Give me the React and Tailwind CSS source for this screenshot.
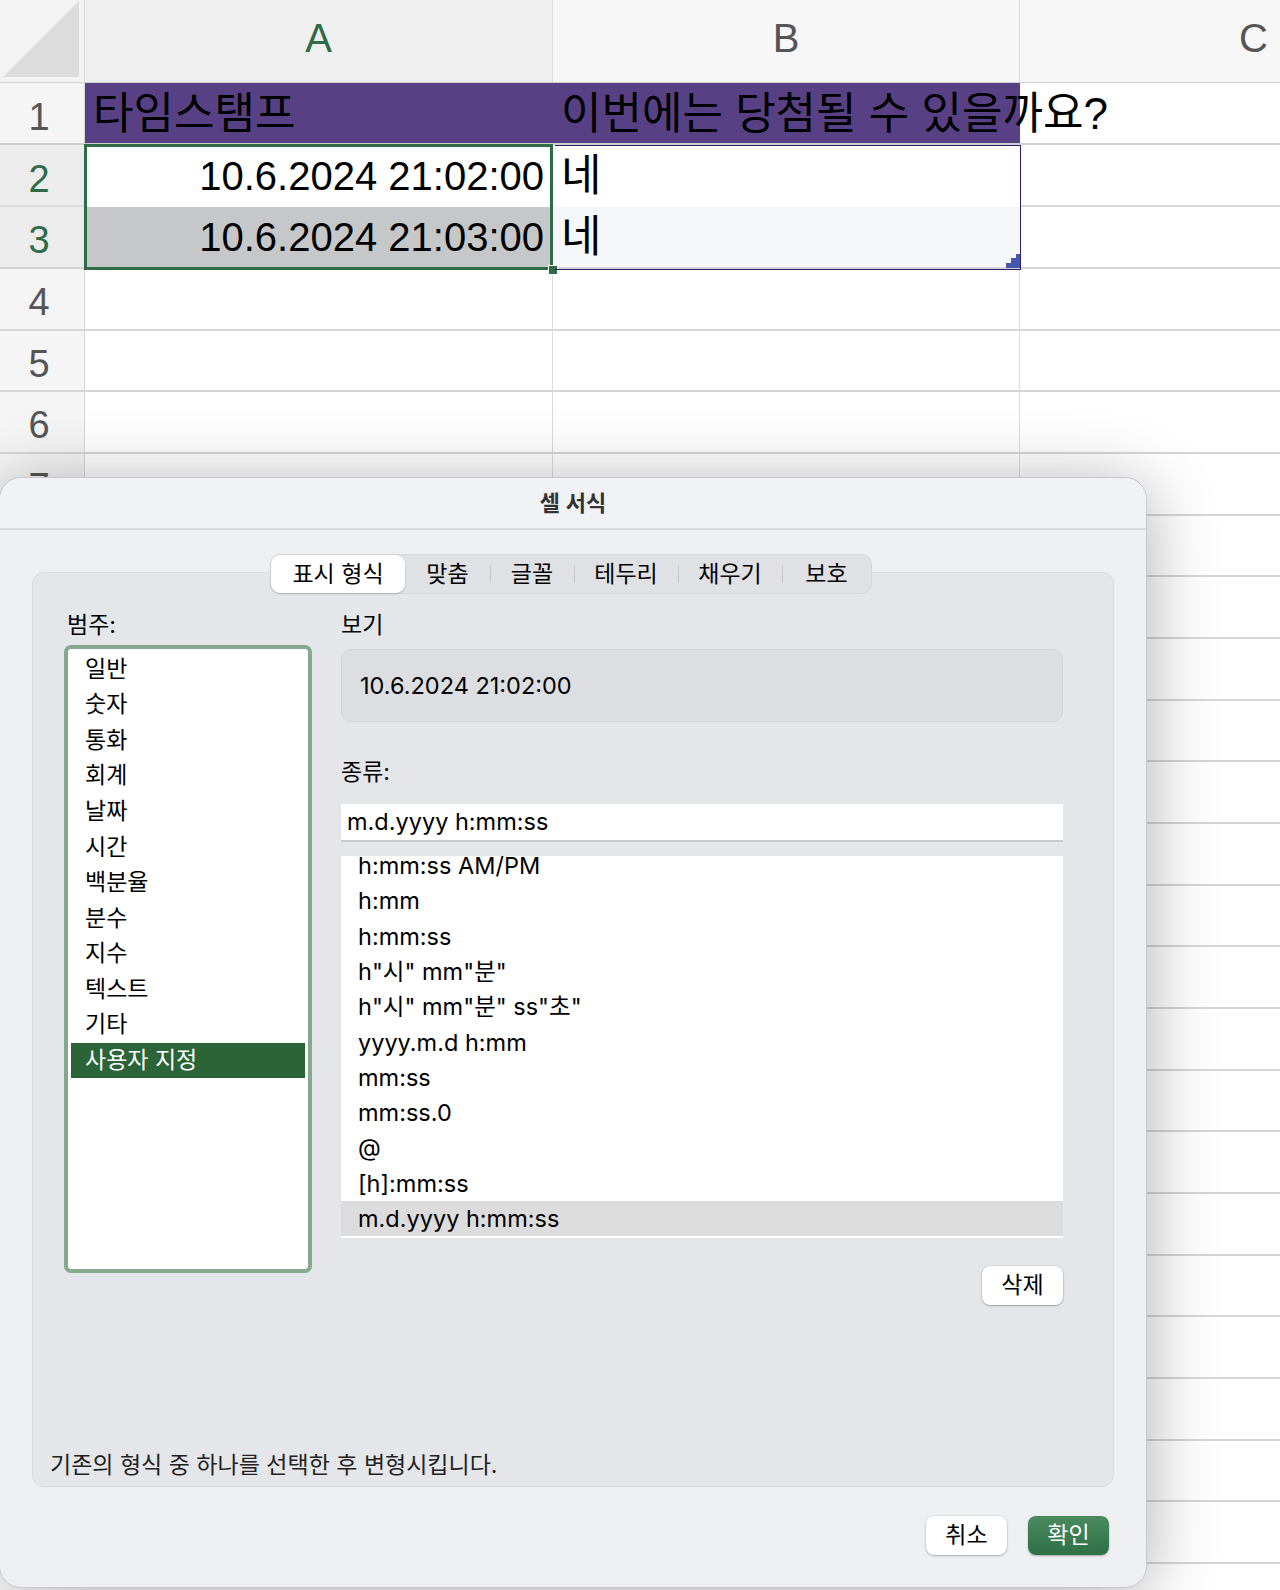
import React from 'react'

const sheetFont = "font-['Liberation_Sans','Noto_Sans_CJK_KR',sans-serif]"
const dlgFont = "font-['Inter','Noto_Sans_CJK_KR',sans-serif]"

const categories = ['일반', '숫자', '통화', '회계', '날짜', '시간', '백분율', '분수', '지수', '텍스트', '기타', '사용자 지정']
const formats = [
  'h:mm:ss AM/PM',
  'h:mm',
  'h:mm:ss',
  'h"시" mm"분"',
  'h"시" mm"분" ss"초"',
  'yyyy.m.d h:mm',
  'mm:ss',
  'mm:ss.0',
  '@',
  '[h]:mm:ss',
  'm.d.yyyy h:mm:ss',
]
const tabs = [
  { name: '표시 형식', w: 'w-[134px]' },
  { name: '맞춤', w: 'w-[85px]' },
  { name: '글꼴', w: 'w-[84px]' },
  { name: '테두리', w: 'w-[104px]' },
  { name: '채우기', w: 'w-[104px]' },
  { name: '보호', w: 'w-[89px]' },
]

function Sheet() {
  const emptyRows = Array.from({ length: 21 }, (_, i) => i + 4)
  return (
    <div className={`relative w-[1280px] leading-none ${sheetFont}`}>
      {/* column header */}
      <div className="grid grid-cols-[85px_468px_467px_1fr] grid-rows-[minmax(0,1fr)] h-[83px] border-b border-[#cfcfcf]">
        <div className="bg-[#f3f3f3] border-r border-[#d8d8d8] flex items-end justify-end pr-[5px] pb-[5px]">
          <svg width="76" height="76" viewBox="0 0 76 76"><polygon points="76,0 76,76 0,76" fill="#dcdcdc" /></svg>
        </div>
        <div className="bg-[#efefef] border-r border-[#dedede] flex items-center justify-center text-[40px] text-[#2e6b46] pb-[6px]">A</div>
        <div className="bg-[#f7f7f7] border-r border-[#dedede] flex items-center justify-center text-[40px] text-[#555] pb-[6px]">B</div>
        <div className="bg-[#f7f7f7] flex items-center justify-end pr-[12px] text-[40px] text-[#555] pb-[6px]">C</div>
      </div>
      {/* row 1 */}
      <div className="grid grid-cols-[85px_468px_467px_1fr] grid-rows-[minmax(0,1fr)] h-[62px] border-b-2 border-[#cfcfcf]">
        <div className="bg-[#f5f5f5] border-r border-[#d8d8d8] flex items-center justify-center pr-[6px] pt-[8px] text-[38px] text-[#555]">1</div>
        <div className="bg-[#574184] flex items-center pl-[8px] pt-[2px] text-[44px] text-black">타임스탬프</div>
        <div className="bg-[#574184] flex items-center pl-[8px] pt-[2px] text-[44px] text-black whitespace-nowrap overflow-visible">
          <span className="relative z-10">이번에는 당첨될 수 있을까요?</span>
        </div>
        <div className="bg-white"></div>
      </div>
      {/* row 2 */}
      <div className="grid grid-cols-[85px_468px_467px_1fr] grid-rows-[minmax(0,1fr)] h-[62px]">
        <div className="bg-[#ececec] border-r border-b-2 border-[#dcdcdc] flex items-center justify-center pr-[6px] pt-[8px] text-[38px] text-[#2e6b46]">2</div>
        <div className="bg-white flex items-center justify-end pr-[9px] text-[40px] text-black">10.6.2024 21:02:00</div>
        <div className="bg-white flex items-center pl-[8px] text-[44px] text-black">네</div>
        <div className="bg-white border-l border-b-2 border-[#d8d8d8]"></div>
      </div>
      {/* row 3 */}
      <div className="grid grid-cols-[85px_468px_467px_1fr] grid-rows-[minmax(0,1fr)] h-[62px] border-b-2 border-[#d4d4d4]">
        <div className="bg-[#ececec] border-r border-[#d8d8d8] flex items-center justify-center pr-[6px] pt-[6px] text-[38px] text-[#2e6b46]">3</div>
        <div className="bg-[#c6c7c9] flex items-center justify-end pr-[9px] text-[40px] text-black">10.6.2024 21:03:00</div>
        <div className="bg-[#f6f7f9] flex items-center pl-[8px] text-[44px] text-black">네</div>
        <div className="bg-white border-l border-[#dcdcdc]"></div>
      </div>
      {emptyRows.map((n, i) => (
        <div key={n} className={`grid grid-cols-[85px_468px_467px_1fr] grid-rows-[minmax(0,1fr)] border-b-2 border-[#d6d6d6] ${i % 3 === 1 ? 'h-[61px]' : 'h-[62px]'}`}>
          <div className="bg-[#f5f5f5] border-r border-[#d8d8d8] flex items-center justify-center pr-[6px] pt-[6px] text-[38px] text-[#555]">{n}</div>
          <div className="bg-white border-r border-[#dcdcdc]"></div>
          <div className="bg-white border-r border-[#dcdcdc]"></div>
          <div className="bg-white"></div>
        </div>
      ))}
      {/* selection A2:A3 */}
      <div className="absolute left-[84px] top-[144px] w-[469px] h-[126px] border-[3px] border-[#2e6b46] pointer-events-none" />
      <div className="absolute left-[548px] top-[265px] w-[10px] h-[10px] bg-[#2e6b46] border border-white" />
      {/* range B2:B3 */}
      <div className="absolute left-[555px] top-[145px] w-[466px] h-[125px] border-r border-b border-t border-[#2b1d6b] pointer-events-none" />
      <div className="absolute left-[1006px] top-[254px]">
        <svg width="14" height="14" viewBox="0 0 14 14"><polygon points="14,0 14,14 0,14 0,9 5,9 5,4 10,4 10,0" fill="#4357b0" /></svg>
      </div>
    </div>
  )
}

function Button({ children, primary }) {
  return (
    <div className={`w-[81px] h-[39px] rounded-[8px] flex items-center justify-center text-[23px] ${primary ? 'bg-gradient-to-b from-[#4a8a5e] to-[#2f7046] text-white shadow-[0_1px_2px_rgba(0,0,0,0.3)]' : 'bg-white text-black shadow-[0_0_0_0.5px_rgba(0,0,0,0.12),0_1px_2px_rgba(0,0,0,0.25)]'}`}>
      {children}
    </div>
  )
}

function Dialog() {
  return (
    <div className={`absolute left-[-1px] top-[477px] w-[1148px] h-[1111px] rounded-[22px] bg-[#eeeff2] border border-[#c8c8cc] shadow-[0_8px_70px_rgba(0,0,0,0.32)] ${dlgFont} text-black flex flex-col`}>
      <div className="h-[52px] flex items-center justify-center bg-[#f1f2f5] rounded-t-[22px] border-b-2 border-[#d9dadd] text-[22px] font-semibold text-[#333]">
        <span>셀 서식</span>
      </div>
      <div className="relative mx-[32px] mt-[42px] h-[915px] rounded-[12px] bg-[#e5e6e9] border border-[#dadbde]">
        {/* tabs */}
        <div className="absolute left-[237px] top-[-19px] h-[40px] flex items-center rounded-[10px] bg-[#e0e1e4] border border-[#d6d7da] text-[23px]">
          {tabs.map((t, i) => (
            <div key={t.name} className={`relative h-[38px] ${t.w} flex items-center justify-center ${i === 0 ? 'bg-white rounded-[9px] shadow-[0_1px_2px_rgba(0,0,0,0.2)]' : ''}`}>
              {i > 1 && <div className="absolute left-0 top-[10px] h-[18px] w-px bg-[#c9cacd]" />}
              <span>{t.name}</span>
            </div>
          ))}
        </div>
        <div className="flex pt-[39px] pl-[31px] pr-[50px]">
          {/* category */}
          <div className="w-[248px] flex flex-col">
            <div className="text-[23px] h-[27px] leading-[27px] pl-[3px]">범주:</div>
            <div className="mt-[6px] h-[628px] rounded-[7px] border-4 border-[#86a98d] bg-white p-[3px] pt-[2px]">
              {categories.map((c, i) => (
                <div key={c} className={`h-[35.6px] flex items-center pl-[14px] text-[23px] ${i === categories.length - 1 ? 'bg-[#2b6437] text-white' : ''}`}>{c}</div>
              ))}
            </div>
          </div>
          {/* type */}
          <div className="flex-1 ml-[29px] flex flex-col">
            <div className="text-[23px] h-[27px] leading-[27px]">보기</div>
            <div className="mt-[10px] h-[73px] rounded-[10px] bg-[#dddee1] border border-[#d5d6d9] flex items-center pl-[18px] text-[23.5px]">10.6.2024 21:02:00</div>
            <div className="mt-[37px] text-[23px] h-[27px] leading-[27px]">종류:</div>
            <div className="mt-[18px] h-[38px] bg-white border-b-2 border-[#c9cacd] flex items-center pl-[6px] text-[23.5px]">m.d.yyyy h:mm:ss</div>
            <div className="mt-[14px] h-[382px] bg-white overflow-hidden">
              <div className="mt-[-8px]">
                {formats.map((f, i) => (
                  <div key={f} className={`h-[35.3px] flex items-center pl-[17px] text-[23.5px] ${i === formats.length - 1 ? 'bg-[#dcdcdd]' : ''}`}>{f}</div>
                ))}
              </div>
            </div>
            <div className="mt-[28px] flex justify-end">
              <Button>삭제</Button>
            </div>
          </div>
        </div>
        <div className="absolute left-[17px] bottom-[7px] text-[23px] leading-[28px] text-[#222]">기존의 형식 중 하나를 선택한 후 변형시킵니다.</div>
      </div>
      <div className="mt-[29px] mr-[37px] flex justify-end gap-[21px]">
        <Button>취소</Button>
        <Button primary>확인</Button>
      </div>
    </div>
  )
}

export default function App() {
  return (
    <div className="relative w-[1280px] h-[1590px] overflow-hidden bg-white">
      <Sheet />
      <Dialog />
    </div>
  )
}
